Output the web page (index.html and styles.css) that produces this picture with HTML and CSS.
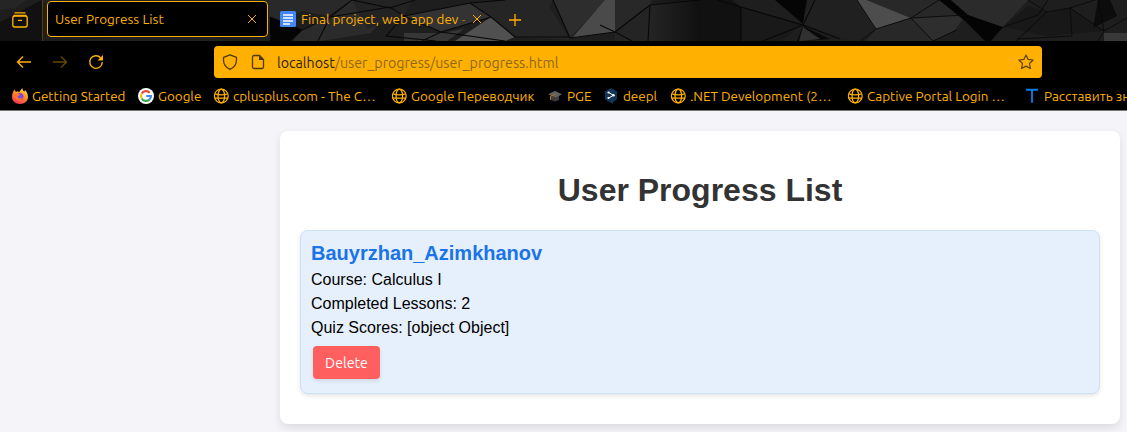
FILE: index.html
```html
<!DOCTYPE html>
<html lang="en">
<head>
<meta charset="utf-8">
<title>User Progress List</title>
<link rel="stylesheet" href="styles.css">
</head>
<body>
<svg class="defs" width="0" height="0" aria-hidden="true">
  <symbol id="globe" viewBox="0 0 16 16"><g fill="none" stroke="#ffb000" stroke-width="1.25"><circle cx="8.300" cy="8" r="6.900"/><ellipse cx="8.300" cy="8" rx="3.300" ry="6.900"/><path d="M1.700 5.900Q8.300 8 14.900 5.900M1.700 10.100h13.200"/></g></symbol>
  <symbol id="close" viewBox="0 0 10 10"><path d="M1 1l8 8M9 1l-8 8" stroke="#ffb000" stroke-width="1" fill="none"/></symbol>
</svg>
<header class="browser">
  <div class="tabs">
    <svg class="theme" width="1127" height="41" viewBox="0 0 1127 41" aria-hidden="true">
      <defs>
        <linearGradient id="shade"><stop stop-color="#000" stop-opacity="0"/><stop offset="1" stop-color="#000" stop-opacity=".55"/></linearGradient>
      </defs>
      <rect width="1127" height="41" fill="#1e1e1e"/>
      <path fill="#252525" d="M0 0h27L15 8 0 10z"/>
      <path fill="#111" d="M0 22l42-22v41H0z"/>
      <path fill="#222" d="M43 0H268V3H43zM60 41l70-4 50 1 30-2 20 5z"/>
      <path fill="#292929" d="M268 0h84l-24 16-26-5-32 16z"/>
      <path fill="#040404" d="M270 17l32 13-12 11h-20z"/>
      <path fill="#2b2b2b" d="M302 29l28-12 22-17 38 8-19 25-50 8h-28z"/>
      <path fill="#232323" d="M352 0h61l-10 16-36 13z"/>
      <path fill="#333" d="M404 16l66-13 21 14-50 15z"/>
      <path fill="#363636" d="M404 33h38l22-4-17 12h-43z"/>
      <path fill="#505050" d="M491 17l24 20-10 4h-50z"/>
      <path fill="#252525" d="M470 3l35-3h48l-4 6 21 34-55-3-24-20z"/>
      <path fill="#2d2d2d" d="M553 0h53l-36 38z"/>
      <path fill="#4a4a4a" d="M605 0h10v32l-43 6z"/>
      <path fill="#282828" d="M615 0h36l-1 5-35 27z"/>
      <path fill="#242424" d="M650 5l35-5h15v41h-85v-9z"/>
      <rect x="650" width="50" height="41" fill="url(#shade)"/>
      <path fill="#111" d="M700 0h32l9 7v34h-41z"/>
      <path fill="#191919" d="M741 7l62 17-22 17h-40z"/>
      <path fill="#050505" d="M775 0h32l-4 24z"/>
      <path fill="#090909" d="M803 26l27 13-27 2h-6z"/>
      <path fill="#303030" d="M803 27l17 12-18 2h-3z"/>
      <path fill="#202020" d="M807 0h50l19 29-22 12-51-17z"/>
      <path fill="#4d4d4d" d="M857 0h10l44 18-35 11z"/>
      <path fill="#282828" d="M867 0h90l8 15-54 3zM876 29l35-11 22 23h-67z"/>
      <path fill="#2e2e2e" d="M911 18l55-3-11 15-22 11z"/>
      <path fill="#040404" d="M939 0h12l18 15 34 12-12 14h-6l-20-20z"/>
      <path fill="#2b2b2b" d="M951 0h77l-25 27-35-12z"/>
      <path fill="#181818" d="M1028 6l19 6 23-4 34 23-57 5-44-9z"/>
      <path fill="#0c0c0c" d="M1098 0h12l7 16-24 12z"/>
      <path fill="#383838" d="M1104 33h23v8h-23z"/>
      <path fill="none" stroke="#080808" stroke-width="1.100" d="M270 17l32 13 28-13 22-17M330 17l-12 24M302 30l-12 11M330 17l60-10 14 9-18 20 50 5M352 0l38 8 25-8M404 16l37 16 64 9M404 16l66-13 21 14-50 15-19 9M470 3l35-3M491 17l24 20h55M553 0l17 38 45-6M650 5l-35 27 17 9M615 32l-15-7M650 5l50-5M650 5l-2 36M718 0l23 7 62 18 12-25M741 7v34M803 25l-40 16M803 25l37 14"/>
      <path fill="none" stroke="#0a0a0a" stroke-width=".9" d="M857 0l19 29-15 12M876 29l35-11 22 23M911 18L939 0M911 18l55-3M957 30l-24 11M1003 27l-15 14M1003 27l35-12 10-15M1028 0l19 12 23-4 34 23-6 10M1047 12l-31 29M1070 8l2 28-55 3M1070 8l25-8M1104 31l23-13M1098 0l6 31"/>
    </svg>
    <div class="recent"><svg width="16" height="16" viewBox="0 0 16 16"><g fill="none" stroke="#ffb000" stroke-width="1.350" stroke-linecap="round"><path d="M3 .8h10"/><rect x=".8" y="4" width="14.400" height="11" rx="2"/><path d="M2 3.500h12M6.500 8.400h3"/></g></svg></div>
    <div class="tab tab-active"><span class="tab-title title-one">User Progress List</span><svg class="close" width="10" height="10"><use href="#close"/></svg></div>
    <div class="tab tab-doc">
      <svg width="16" height="16" viewBox="0 0 16 16"><rect width="16" height="16" rx="1.500" fill="#4285f4"/><path d="M3 4h10M3 7h10M3 10h10M3 13h7" stroke="#fff" stroke-width="1.500"/></svg>
      <span class="tab-title title-two">Final project, web app dev <i class="faded">-</i></span><svg class="close" width="10" height="10"><use href="#close"/></svg>
    </div>
    <svg class="new-tab" width="12" height="12" viewBox="0 0 12 12"><path d="M6 0v12M0 6h12" stroke="#ffb000" stroke-width="1.300"/></svg>
  </div>
  <div class="toolbar">
    <div class="nav">
      <svg width="16" height="16" viewBox="0 0 16 16"><path d="M15 8H2M7 2.500L1.500 8 7 13.500" fill="none" stroke="#ffb000" stroke-width="1.400"/></svg>
      <svg width="16" height="16" viewBox="0 0 16 16"><path d="M1 8h13M9 2.500L14.500 8 9 13.500" fill="none" stroke="#664700" stroke-width="1.400"/></svg>
      <svg width="16" height="16" viewBox="0 0 16 16"><path d="M12.600 3.700A6.300 6.300 0 1 0 14.300 8" fill="none" stroke="#ffb000" stroke-width="1.400"/><path d="M15 1v5.500H9.500z" fill="#ffb000"/></svg>
    </div>
    <div class="address">
      <svg class="shield" width="16" height="16" viewBox="0 0 16 16"><path d="M8 .8L14.500 3.300V6C14.500 10.500 12 13.500 8 15.300 4 13.500 1.500 10.500 1.500 6V3.300z" fill="none" stroke="#4e3910" stroke-width="1.300" stroke-linejoin="round"/></svg>
      <svg class="page" width="14" height="16" viewBox="0 0 14 16"><path d="M3 1.500h5.500L12.500 5.500v7.500a1.500 1.500 0 0 1-1.500 1.500H3A1.500 1.500 0 0 1 1.500 13V3A1.500 1.500 0 0 1 3 1.500z" fill="none" stroke="#4e3910" stroke-width="1.300"/><path d="M8 1v5h5z" fill="#4e3910"/></svg>
      <span class="url"><b>localhost</b>/user_progress/user_progress.html</span>
      <svg class="star" width="16" height="16" viewBox="0 0 16 16"><path d="M8 .9l2.100 4.500 5 .6-3.600 3.500.9 5L8 12.100l-4.400 2.400.9-5L.9 6l5-.6z" fill="none" stroke="#5b4212" stroke-width="1.200" stroke-linejoin="round"/></svg>
    </div>
  </div>
  <nav class="bookmarks">
    <span class="bookmark"><svg width="16" height="16" viewBox="0 0 16 16"><defs><linearGradient id="fire" x1=".8" y1="0" x2=".3" y2="1"><stop stop-color="#ffdf3c"/><stop offset=".5" stop-color="#ff8a1e"/><stop offset="1" stop-color="#f62e5b"/></linearGradient></defs><path d="M2.300 1.500l1.700 2.500L6 3l1 1.500C8 3 9 1.500 10.200 0l.8 2.500 1.500 1 .5-1.500C15 4 16 6.500 16 9c0 4-3.500 7-8 7s-8-3-8-7c0-2.500.8-4.500 2.300-7.500z" fill="url(#fire)"/><circle cx="8" cy="8.500" r="3.500" fill="#8544e0"/><path d="M3 6l3.500-.5 1.500 1.300-2.500 1.700c.5 2.500 3.500 2.500 5.500 1-1 3.500-6.500 4-8.500 0z" fill="#ff7427"/></svg><span>Getting Started</span></span>
    <span class="bookmark"><svg width="16" height="16" viewBox="0 0 16 16"><circle cx="8" cy="8" r="8" fill="#fff"/><g fill="none" stroke-width="2.100"><path d="M11.700 4.700A5 5 0 0 0 3.700 5.600" stroke="#ea4335"/><path d="M3.700 5.500a5 5 0 0 0 0 5" stroke="#fbbc05"/><path d="M3.700 10.400a5 5 0 0 0 7.700 1.200" stroke="#34a853"/><path d="M11.300 11.700A5 5 0 0 0 13 8H8.200" stroke="#4285f4"/></g></svg><span>Google</span></span>
    <span class="bookmark"><svg width="16" height="16"><use href="#globe"/></svg><span>cplusplus.com - The C…</span></span>
    <span class="bookmark"><svg width="16" height="16"><use href="#globe"/></svg><span>Google Переводчик</span></span>
    <span class="bookmark"><svg width="16" height="16" viewBox="0 0 16 16"><path d="M4 7v5l4 1.500 4-1.500V7z" fill="#3d3d3d"/><path d="M1 6.300L8 3l7 3.300L9 9.500z" fill="#626262"/><path d="M8 6.500L3.500 8v4" stroke="#a87118" fill="none"/></svg><span>PGE</span></span>
    <span class="bookmark"><svg width="16" height="16" viewBox="0 0 16 16"><path d="M8 0l6 3.500v7.700L9.800 14v2L2 11.300V3.500z" fill="#123657"/><path d="M5.600 4.500L10.500 7.300 5.600 10" stroke="#fff" fill="none"/><g fill="#fff"><circle cx="5.500" cy="4.500" r="1.100"/><circle cx="10.500" cy="7.300" r="1.200"/><circle cx="5.500" cy="10" r="1.100"/></g></svg><span>deepl</span></span>
    <span class="bookmark"><svg width="16" height="16"><use href="#globe"/></svg><span>.NET Development (2…</span></span>
    <span class="bookmark"><svg width="16" height="16"><use href="#globe"/></svg><span>Captive Portal Login …</span></span>
    <span class="bookmark"><svg width="16" height="16" viewBox="0 0 16 16"><path d="M2 1.800h12M8 1.800v13" stroke="#087bea" stroke-width="1.900"/></svg><span>Расставить зн</span></span>
  </nav>
</header>
<main class="page-body">
  <section class="container">
    <h1>User Progress List</h1>
    <article class="progress-card">
      <h2>Bauyrzhan_Azimkhanov</h2>
      <p>Course: Calculus I</p>
      <p>Completed Lessons: 2</p>
      <p>Quiz Scores: [object Object]</p>
      <button class="delete">Delete</button>
    </article>
  </section>
</main>
</body>
</html>
```

FILE: styles.css
```css
* { box-sizing: border-box; }
body { margin: 0; width: 1127px; height: 432px; overflow: hidden; background: #f4f4f9; font-family: "Liberation Sans", Arial, sans-serif; color: #000; }
svg { display: block; flex: none; }
.defs { position: absolute; }
.browser { height: 111px; background: #000; color: #ffb000; border-bottom: 1px solid #777; font: 13.45px/20px Ubuntu, "Noto Sans", sans-serif; white-space: nowrap; overflow: hidden; }
.tabs { position: relative; display: flex; height: 41px; isolation: isolate; }
.theme { position: absolute; inset: 0; z-index: -1; }
.recent { width: 43px; padding: 12px 0 0 12px; border-right: 1px solid #59400a; }
.tab { display: flex; align-items: center; height: 36px; margin-top: 1px; }
.tab-active { width: 221px; margin-left: 4px; padding: 0 10px 0 7px; justify-content: space-between; border: 1px solid #ffb000; border-radius: 4px; background: #000; }
.tab-doc { width: 202px; margin-left: 12px; gap: 5px; }
.tab-doc .close { margin-left: auto; }
.tab-title { display: block; overflow: hidden; }
.title-one { letter-spacing: .06px; }
.title-two { width: 166px; }
.faded { font-style: normal; opacity: .5; }
.new-tab { margin: 14px 0 0 27px; }
.toolbar { display: flex; height: 37px; padding-top: 5px; }
.nav { display: flex; gap: 20px; width: 214px; padding: 8px 0 0 16px; }
.address { display: flex; align-items: center; width: 828px; height: 32px; padding: 0 8px; background: #ffb000; border-radius: 4px; }
.shield { margin-right: 13px; }
.page { margin-right: 12px; }
.url { flex: 1; padding-top: 1px; font-size: 14.2px; color: #8d681a; }
.url b { font-weight: 400; color: #29231a; }
.bookmarks { display: grid; grid-template-columns: 126px 75px 178px 156px 56px 67px 177px 177px 103px; height: 32px; padding: 4px 0 0 12px; align-items: center; }
.bookmark { display: flex; align-items: center; gap: 4px; }
.page-body { padding: 20px 7px 0 280px; }
.container { height: 293px; padding: 20px; background: #fff; border-radius: 8px; box-shadow: 0 4px 8px rgba(0, 0, 0, .1); }
h1 { margin: 19px 0 20px; text-align: center; color: #333; font-size: 32px; line-height: 40px; }
.progress-card { height: 164px; padding: 10px; border: 1px solid #cfe2f3; border-radius: 8px; background: #e6f0fc; box-shadow: 0 2px 4px rgba(0, 0, 0, .1); }
h2 { margin: 0 0 3px; color: #1a73e8; font-size: 20px; line-height: 24px; }
p { margin: 0; font-size: 16px; line-height: 24px; }
.delete { display: block; width: 67px; height: 33px; margin: 6px 0 0 2px; padding: 0; border: 0; border-radius: 4px; background: #ff5f5f; color: #fff; font: 14.2px/20px Ubuntu, "Noto Sans", sans-serif; box-shadow: 0 2px 4px rgba(0, 0, 0, .1); }
```
